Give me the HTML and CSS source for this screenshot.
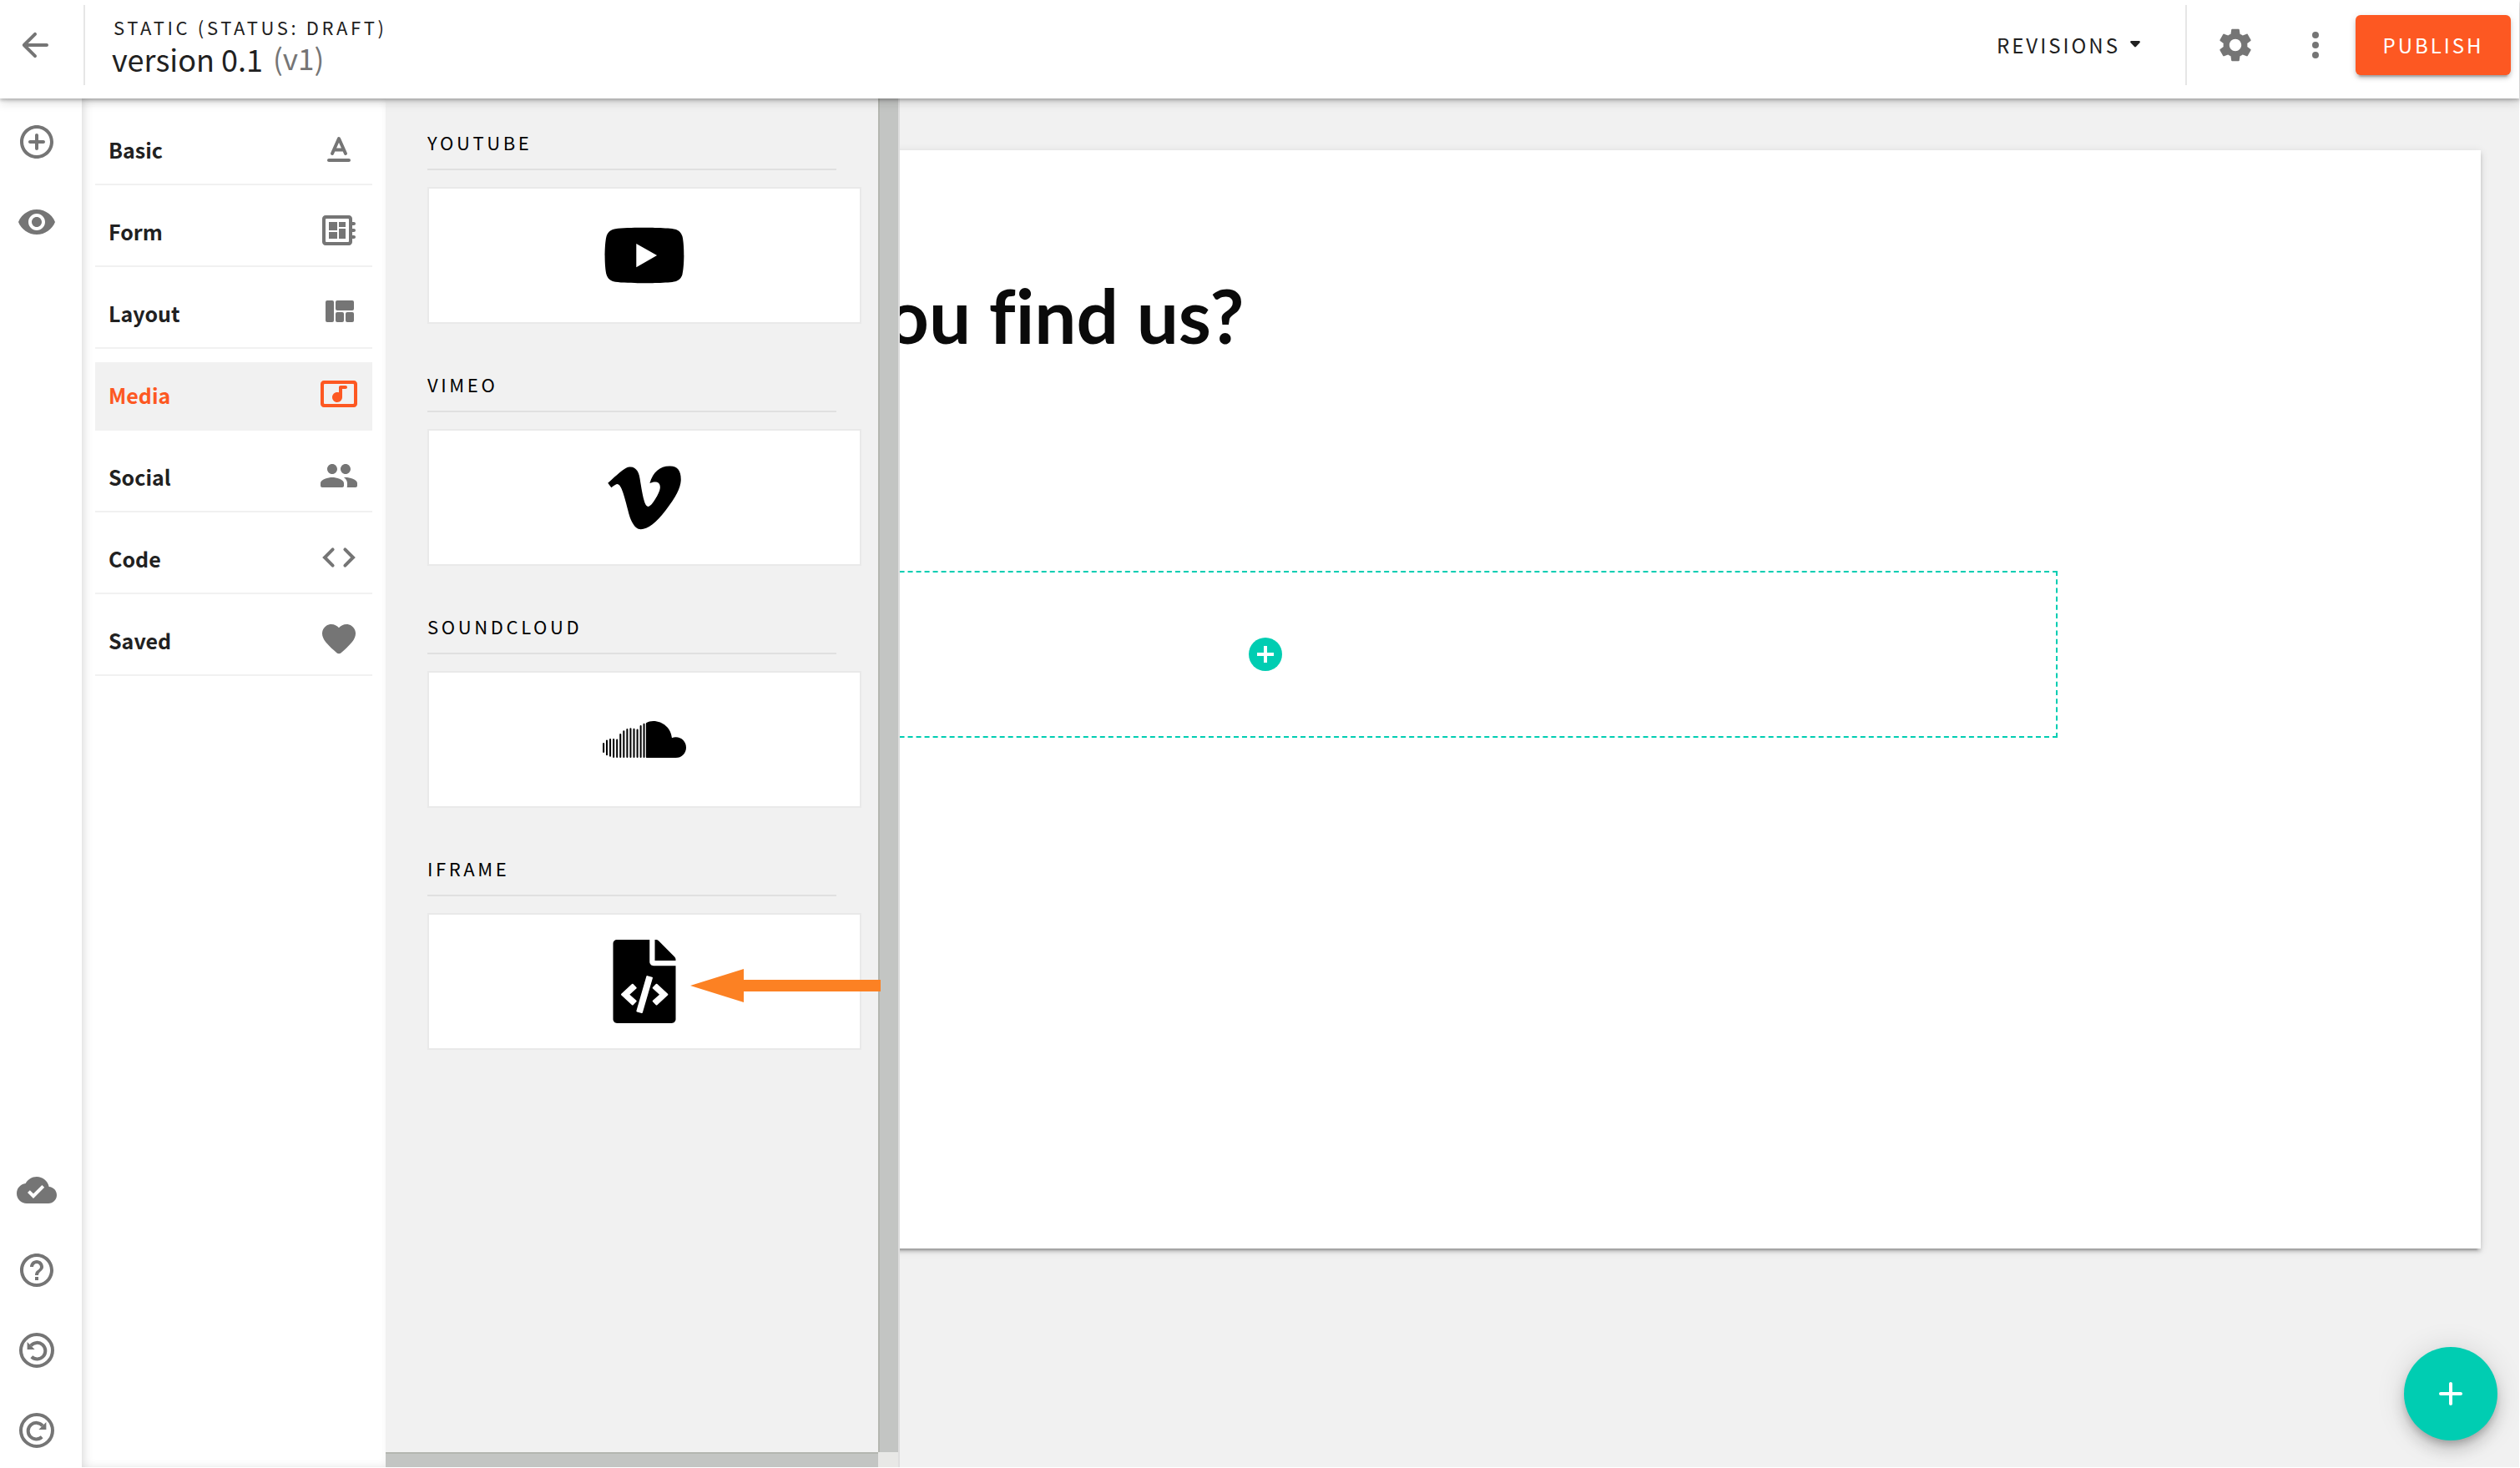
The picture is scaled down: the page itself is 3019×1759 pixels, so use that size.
FILE: index.html
```html
<!DOCTYPE html>
<html lang="en">
<head>
<meta charset="utf-8">
<title>version 0.1</title>
<link rel="stylesheet" href="styles.css">
</head>
<body>
<header class="topbar">
  <button class="icon-button back" type="button" aria-label="Back">
    <svg class="icon" viewBox="0 0 24 24"><path d="M19 11H7.83l4.88-4.88c.39-.39.39-1.03 0-1.42a.996.996 0 0 0-1.41 0l-6.59 6.59a.996.996 0 0 0 0 1.41l6.59 6.59a.996.996 0 1 0 1.41-1.41L7.83 13H19c.55 0 1-.45 1-1s-.45-1-1-1z"/></svg>
  </button>
  <div class="titles">
    <p class="status">STATIC (STATUS: DRAFT)</p>
    <h1 class="version">version 0.1 <span class="version-tag">(v1)</span></h1>
  </div>
  <button class="revisions" type="button">REVISIONS
    <svg class="caret" viewBox="0 0 12 8"><path d="M1.5 0h9c1.3 0 1.8 1.400.9 2.300L6.900 7.100c-.5.500-1.300.500-1.800 0L.6 2.300C-.300 1.400.200 0 1.500 0z"/></svg>
  </button>
  <div class="actions">
    <button class="icon-button" type="button" aria-label="Settings">
      <svg class="icon" viewBox="0 0 24 24"><path d="M19.14 12.94c.04-.3.06-.61.06-.94 0-.32-.02-.64-.07-.94l2.030-1.580c.18-.14.23-.41.12-.61l-1.920-3.320c-.12-.22-.37-.29-.59-.22l-2.390.96c-.5-.38-1.030-.7-1.620-.94l-.36-2.540c-.04-.24-.24-.41-.48-.41h-3.840c-.24 0-.43.17-.47.41l-.36 2.540c-.59.24-1.130.57-1.620.94l-2.390-.96c-.22-.08-.47 0-.59.22L2.740 8.870c-.12.21-.08.47.12.61l2.030 1.580c-.05.3-.09.63-.09.94s.02.64.07.94l-2.030 1.580c-.18.14-.23.41-.12.61l1.920 3.320c.12.22.37.29.59.22l2.390-.96c.5.38 1.030.7 1.620.94l.36 2.540c.05.24.24.41.48.41h3.840c.24 0 .44-.17.47-.41l.36-2.540c.59-.24 1.130-.56 1.620-.94l2.390.96c.22.08.47 0 .59-.22l1.920-3.320c.12-.22.07-.47-.12-.61l-2.010-1.580zM12 15.600c-1.980 0-3.600-1.620-3.600-3.600s1.620-3.600 3.600-3.600 3.600 1.620 3.600 3.600-1.620 3.600-3.600 3.600z"/></svg>
    </button>
    <button class="icon-button" type="button" aria-label="More">
      <svg class="icon" viewBox="0 0 24 24"><circle cx="12" cy="6" r="2"/><circle cx="12" cy="12" r="2"/><circle cx="12" cy="18" r="2"/></svg>
    </button>
  </div>
  <button class="publish" type="button">PUBLISH</button>
</header>

<div class="workspace">
  <nav class="rail" aria-label="Tools">
    <button class="icon-button" type="button" aria-label="Add">
      <svg class="icon" viewBox="0 0 24 24"><path d="M12 7c-.55 0-1 .45-1 1v3H8c-.55 0-1 .45-1 1s.45 1 1 1h3v3c0 .55.45 1 1 1s1-.45 1-1v-3h3c.55 0 1-.45 1-1s-.45-1-1-1h-3V8c0-.55-.45-1-1-1zm0-5C6.480 2 2 6.480 2 12s4.480 10 10 10 10-4.480 10-10S17.520 2 12 2zm0 18c-4.410 0-8-3.590-8-8s3.590-8 8-8 8 3.590 8 8-3.590 8-8 8z"/></svg>
    </button>
    <button class="icon-button" type="button" aria-label="Preview">
      <svg class="icon" viewBox="0 0 24 24"><path d="M12 4.500C7 4.500 2.730 7.610 1 12c1.730 4.390 6 7.500 11 7.500s9.270-3.110 11-7.500c-1.730-4.390-6-7.500-11-7.500zM12 17c-2.760 0-5-2.240-5-5s2.240-5 5-5 5 2.240 5 5-2.240 5-5 5zm0-8c-1.660 0-3 1.340-3 3s1.340 3 3 3 3-1.340 3-3-1.340-3-3-3z"/></svg>
    </button>
    <button class="icon-button rail-bottom" type="button" aria-label="Saved to cloud">
      <svg class="icon" viewBox="0 0 24 24"><path d="M19.350 10.040C18.670 6.590 15.640 4 12 4 9.110 4 6.600 5.640 5.350 8.040 2.340 8.360 0 10.910 0 14c0 3.310 2.690 6 6 6h13c2.760 0 5-2.240 5-5 0-2.640-2.050-4.780-4.650-4.960zM10 17l-3.500-3.500 1.410-1.410L10 14.170 15.180 9l1.410 1.410L10 17z"/></svg>
    </button>
    <button class="icon-button" type="button" aria-label="Help">
      <svg class="icon" viewBox="0 0 24 24"><path d="M11 18h2v-2h-2v2zm1-16C6.480 2 2 6.480 2 12s4.480 10 10 10 10-4.480 10-10S17.520 2 12 2zm0 18c-4.410 0-8-3.590-8-8s3.590-8 8-8 8 3.590 8 8-3.590 8-8 8zm0-14c-2.210 0-4 1.790-4 4h2c0-1.100.9-2 2-2s2 .9 2 2c0 2-3 1.750-3 5h2c0-2.250 3-2.500 3-5 0-2.210-1.790-4-4-4z"/></svg>
    </button>
    <button class="icon-button" type="button" aria-label="Undo">
      <svg class="icon line" viewBox="0 0 24 24"><circle cx="12" cy="12" r="9.500"/><path d="M8.500 9.200A4.900 4.900 0 1 1 8.900 15.900"/><path class="solid" d="M6.300 7v4.500h4.500z"/></svg>
    </button>
    <button class="icon-button" type="button" aria-label="Redo">
      <svg class="icon line" viewBox="0 0 24 24"><circle cx="12" cy="12" r="9.500"/><path d="M15.500 9.200A4.900 4.900 0 1 0 15.100 15.900"/><path class="solid" d="M17.700 7v4.500h-4.500z"/></svg>
    </button>
  </nav>

  <nav class="categories" aria-label="Component categories">
    <a class="category" href="#basic">Basic
      <svg class="icon" viewBox="0 0 24 24"><path d="M6 18h12c.55 0 1 .45 1 1s-.45 1-1 1H6c-.55 0-1-.45-1-1s.45-1 1-1z"/><path class="stroke" d="M8 15l4-9 4 9M9.300 12.700h5.400"/></svg></a>
    <a class="category" href="#form">Form
      <svg class="icon" viewBox="0 0 24 24"><path fill-rule="evenodd" d="M4 3h14c1.100 0 2 .9 2 2v2h1c.55 0 1 .45 1 1s-.45 1-1 1h-1v2h1c.55 0 1 .45 1 1s-.45 1-1 1h-1v2h1c.55 0 1 .45 1 1s-.45 1-1 1h-1v2c0 1.100-.9 2-2 2H4c-1.100 0-2-.9-2-2V5c0-1.100.9-2 2-2zm.5 2a.5.5 0 0 0-.5.5v13a.5.5 0 0 0 .5.5h13a.5.5 0 0 0 .5-.5v-13a.5.5 0 0 0-.5-.5z"/><path d="M6 13h5v4H6zM12 7h4v3h-4zM6 7h5v5H6zM12 11h4v6h-4z"/></svg></a>
    <a class="category" href="#layout">Layout
      <svg class="icon" viewBox="0 0 24 24"><rect x="4" y="5" width="5" height="13" rx="1"/><rect x="10" y="5" width="11" height="6" rx="1"/><rect x="10" y="12" width="5" height="6" rx="1"/><rect x="16" y="12" width="5" height="6" rx="1"/></svg></a>
    <a class="category active" href="#media">Media
      <svg class="icon" viewBox="0 0 24 24"><path fill-rule="evenodd" d="M3 4h18c1.100 0 2 .9 2 2v12c0 1.100-.9 2-2 2H3c-1.100 0-2-.9-2-2V6c0-1.100.9-2 2-2zm.5 2a.5.5 0 0 0-.5.5v11a.5.5 0 0 0 .5.5h17a.5.5 0 0 0 .5-.5v-11a.5.5 0 0 0-.5-.5z"/><path d="M8 14c0-1.660 1.340-3 3-3 .35 0 .69.07 1 .18V8c0-.55.45-1 1-1h3c.55 0 1 .45 1 1s-.45 1-1 1h-2v5.030c-.02 1.640-1.350 2.970-3 2.970-1.660 0-3-1.340-3-3z"/></svg></a>
    <a class="category" href="#social">Social
      <svg class="icon" viewBox="0 0 24 24"><path d="M16 11c1.660 0 2.990-1.340 2.990-3S17.660 5 16 5s-3 1.340-3 3 1.340 3 3 3zm-8 0c1.660 0 2.990-1.340 2.990-3S9.660 5 8 5 5 6.340 5 8s1.340 3 3 3zm0 2c-2.330 0-7 1.170-7 3.500V18c0 .55.45 1 1 1h12c.55 0 1-.45 1-1v-1.500c0-2.330-4.670-3.500-7-3.500zm8 0c-.29 0-.62.02-.97.05.02.01.03.03.04.04 1.140.83 1.930 1.940 1.930 3.410V18c0 .35-.07.69-.18 1H22c.55 0 1-.45 1-1v-1.500c0-2.330-4.670-3.500-7-3.500z"/></svg></a>
    <a class="category" href="#code">Code
      <svg class="icon line" viewBox="0 0 24 24"><path stroke-linecap="round" d="M8.300 7.200L3.500 12l4.800 4.800M15.700 7.200l4.800 4.800-4.800 4.800"/></svg></a>
    <a class="category" href="#saved">Saved
      <svg class="icon" viewBox="0 0 24 24"><path d="M13.350 20.130c-.76.69-1.930.69-2.690-.01l-.11-.1C5.300 15.270 1.870 12.160 2 8.280c.06-1.700.93-3.330 2.340-4.290 2.640-1.800 5.900-.96 7.660 1.100 1.760-2.060 5.020-2.910 7.660-1.100 1.410.96 2.280 2.590 2.340 4.290.14 3.880-3.300 6.990-8.550 11.760l-.1.090z"/></svg></a>
  </nav>

  <section class="flyout" aria-label="Media components">
    <div class="flyout-body">
      <section class="group">
        <h2 class="group-title">YOUTUBE</h2>
        <button class="card" type="button" aria-label="YouTube">
          <svg class="logo" viewBox="0 0 576 512"><path d="M549.655 124.083c-6.281-23.650-24.787-42.276-48.284-48.597C458.781 64 288 64 288 64S117.220 64 74.629 75.486c-23.497 6.322-42.003 24.947-48.284 48.597-11.412 42.867-11.412 132.305-11.412 132.305s0 89.438 11.412 132.305c6.281 23.650 24.787 41.500 48.284 47.821C117.220 448 288 448 288 448s170.780 0 213.371-11.486c23.497-6.321 42.003-24.171 48.284-47.821 11.412-42.867 11.412-132.305 11.412-132.305s0-89.438-11.412-132.305zm-317.510 213.508V175.185l142.739 81.205-142.739 81.201z"/></svg>
        </button>
      </section>
      <section class="group">
        <h2 class="group-title">VIMEO</h2>
        <button class="card" type="button" aria-label="Vimeo">
          <svg class="logo" viewBox="0 0 448 512"><path d="M447.800 153.600c-2 43.600-32.400 103.300-91.400 179.100-60.900 79.200-112.400 118.800-154.600 118.800-26.100 0-48.200-24.100-66.300-72.300C100.300 250 85.300 174.300 56.200 174.300c-3.400 0-15.100 7.100-35.200 21.100L0 168.200c51.600-45.300 100.900-95.700 131.800-98.500 34.900-3.400 56.300 20.500 64.400 71.500 28.700 181.500 41.400 208.900 93.600 126.700 18.700-29.600 28.800-52.100 30.200-67.600 4.800-45.900-35.800-42.800-63.300-31 22-72.100 64.100-107.100 126.200-105.100 45.800 1.200 67.500 31.100 64.900 89.400z"/></svg>
        </button>
      </section>
      <section class="group">
        <h2 class="group-title">SOUNDCLOUD</h2>
        <button class="card" type="button" aria-label="SoundCloud">
          <svg class="logo" viewBox="0 0 640 512"><path d="M334 129c15-9 34-14 54-14 76 0 137 57 143 130 9-4 19-6 30-6 44 0 79 35 79 79s-35 79-79 79H339c-4 0-7-3-7-7V134c0-2 1-4 2-5z"/><path stroke="#000" stroke-width="13" stroke-linecap="round" d="M7 288v64M32 266v106M58 256v126M84 256v134M110 260v130M136 217v173M162 194v196M188 180v210M214 175v215M240 178v212M266 182v208M292 153v237M317 140v250"/></svg>
        </button>
      </section>
      <section class="group">
        <h2 class="group-title">IFRAME</h2>
        <button class="card" type="button" aria-label="Iframe">
          <svg class="logo" viewBox="0 0 384 512"><path d="M384 121.941V128H256V0h6.059c6.365 0 12.470 2.529 16.971 7.029l97.941 97.941A24.005 24.005 0 0 1 384 121.941zM248 160c-13.200 0-24-10.800-24-24V0H24C10.745 0 0 10.745 0 24v464c0 13.255 10.745 24 24 24h336c13.255 0 24-10.745 24-24V160H248zM123.206 400.505a5.400 5.400 0 0 1-7.633.246l-64.866-60.812a5.400 5.400 0 0 1 0-7.879l64.866-60.812a5.400 5.400 0 0 1 7.633.246l19.579 20.885a5.400 5.400 0 0 1-.372 7.747L101.650 336l40.763 35.874a5.400 5.400 0 0 1 .372 7.747l-19.579 20.884zm51.295 50.479l-27.970-8.120a5.402 5.402 0 0 1-3.687-6.694l61.440-211.626a5.402 5.402 0 0 1 6.694-3.687l27.970 8.120a5.400 5.400 0 0 1 3.687 6.694L181.196 447.297a5.402 5.402 0 0 1-6.695 3.687zm160.792-111.045l-64.866 60.812a5.400 5.400 0 0 1-7.633-.246l-19.580-20.885a5.400 5.400 0 0 1 .372-7.747L284.350 336l-40.763-35.874a5.400 5.400 0 0 1-.372-7.747l19.580-20.885a5.400 5.400 0 0 1 7.633-.246l64.866 60.812a5.400 5.400 0 0 1-.001 7.879z"/></svg>
          <svg class="pointer" viewBox="0 0 228 40"><path d="M0 20L64 0v13h164v14H64v13z"/></svg>
        </button>
      </section>
    </div>
    <div class="scroll-y"></div>
    <div class="scroll-x"></div>
    <div class="scroll-corner"></div>
  </section>

  <main class="canvas">
    <article class="sheet">
      <h2 class="headline">Where can you find us?</h2>
      <div class="dropzone">
        <button class="add-block" type="button" aria-label="Add block">
          <svg class="add-icon" viewBox="0 0 40 40"><path d="M18 10h4v8h8v4h-8v8h-4v-8h-8v-4h8z"/></svg>
        </button>
      </div>
    </article>
  </main>
</div>

<button class="fab" type="button" aria-label="Add section">
  <svg class="icon" viewBox="0 0 24 24"><path d="M18 13h-5v5c0 .55-.45 1-1 1s-1-.45-1-1v-5H6c-.55 0-1-.45-1-1s.45-1 1-1h5V6c0-.55.45-1 1-1s1 .45 1 1v5h5c.55 0 1 .45 1 1s-.45 1-1 1z"/></svg>
</button>
</body>
</html>
```
FILE: styles.css
```css
* {
  box-sizing: border-box;
}

body {
  margin: 0;
  min-height: 100vh;
  padding: 0 1px 1px 0;
  display: flex;
  flex-direction: column;
  background: #fff;
  color: #212121;
  font-family: "Noto Sans CJK SC", "Noto Sans", sans-serif;
}

button {
  margin: 0;
  padding: 0;
  border: 0;
  background: none;
  color: inherit;
  font: inherit;
  cursor: pointer;
}

h1,
h2,
p {
  margin: 0;
  font-weight: 400;
}

.icon {
  display: block;
  width: 48px;
  height: 48px;
  flex: none;
  fill: currentColor;
}

.icon.line {
  fill: none;
  stroke: currentColor;
  stroke-width: 2;
}

.icon .solid {
  fill: currentColor;
  stroke: none;
}

.icon .stroke {
  fill: none;
  stroke: currentColor;
  stroke-width: 2;
  stroke-linecap: round;
  stroke-linejoin: round;
}

.icon-button {
  width: 48px;
  height: 48px;
  color: #757575;
}

/* Top bar */
.topbar {
  position: relative;
  z-index: 4;
  display: flex;
  align-items: center;
  padding: 6px 10px 16px 18px;
  background: #fff;
  box-shadow: 0 2px 4px rgba(0, 0, 0, 0.24), 0 4px 12px rgba(0, 0, 0, 0.16);
}

.titles {
  display: flex;
  flex-direction: column;
  justify-content: center;
  height: 96px;
  margin-left: 34px;
  padding-left: 32px;
  border-left: 2px solid #e6e6e6;
}

.status {
  padding-left: 2px;
  font-size: 22px;
  line-height: 32px;
  letter-spacing: 0.165em;
}

.version {
  font-size: 36px;
  line-height: 44px;
}

.version-tag {
  margin-left: 4px;
  color: #757575;
  font-size: 35px;
  line-height: 1;
  vertical-align: 2px;
}

.revisions {
  display: flex;
  align-items: center;
  gap: 12px;
  margin-left: auto;
  padding-bottom: 2px;
  font-size: 24px;
  letter-spacing: 3px;
}

.caret {
  width: 12px;
  height: 8px;
  fill: currentColor;
}

.actions {
  display: flex;
  align-items: center;
  gap: 48px;
  height: 96px;
  margin-left: 54px;
  padding: 0 24px 0 34px;
  border-left: 2px solid #e6e6e6;
}

.publish {
  width: 186px;
  height: 72px;
  padding-bottom: 2px;
  border-radius: 6px;
  background: #fd5822;
  box-shadow: 0 6px 2px -4px rgba(0, 0, 0, 0.2), 0 4px 4px rgba(0, 0, 0, 0.14), 0 2px 10px rgba(0, 0, 0, 0.12);
  color: #fff;
  font-size: 24px;
  letter-spacing: 3px;
}

/* The side panels lie on top of the canvas in the same grid row */
.workspace {
  flex: 1;
  display: grid;
  grid-template: 1fr / 98px 364px 616px 1fr;
}

.rail,
.categories,
.flyout {
  grid-row: 1;
  z-index: 2;
}

.rail {
  grid-column: 1;
  display: flex;
  flex-direction: column;
  align-items: center;
  gap: 48px;
  padding: 28px 10px 20px 0;
  background: #fff;
}

.rail-bottom {
  margin-top: auto;
}

.categories {
  grid-column: 2;
  display: flex;
  flex-direction: column;
  gap: 16px;
  padding: 22px 16px;
  background: #fff;
  box-shadow: inset 4px 0 14px -4px rgba(0, 0, 0, 0.2);
}

.category {
  display: flex;
  align-items: flex-start;
  justify-content: space-between;
  padding: 14px 16px 16px;
  border-bottom: 2px solid #f1f1f1;
  color: inherit;
  font-size: 25px;
  font-weight: 700;
  line-height: 50px;
  text-decoration: none;
}

.category .icon {
  color: #757575;
}

.category.active,
.category.active .icon {
  background: #f1f1f1;
  color: #fd5822;
}

/* Component flyout */
.flyout {
  grid-column: 3;
  display: grid;
  grid-template: 1fr 18px / minmax(0, 1fr) 24px;
  border-right: 2px solid #dedede;
  background: #f1f1f1;
}

.flyout-body {
  display: flex;
  flex-direction: column;
  gap: 58px;
  padding: 38px 50px;
  color: #000;
}

.group-title {
  margin-bottom: 20px;
  padding-bottom: 18px;
  border-bottom: 2px solid #e0e0e0;
  font-size: 22px;
  line-height: 28px;
  letter-spacing: 0.165em;
}

.card {
  position: relative;
  display: flex;
  align-items: center;
  justify-content: center;
  width: 520px;
  height: 164px;
  border: 2px solid #e9e9e9;
  background: #fff;
}

.logo {
  width: 100px;
  height: 100px;
}

.pointer {
  position: absolute;
  top: 65px;
  left: 313px;
  z-index: 3;
  width: 228px;
  height: 40px;
  fill: #fc8123;
}

.scroll-y {
  border-left: 2px solid #b4b6b0;
  background: #c3c5c3;
}

.scroll-x {
  border-top: 2px solid #b4b6b0;
  background: #c3c5c3;
}

.scroll-corner {
  background: #e8e8e6;
}

/* Canvas */
.canvas {
  grid-row: 1;
  grid-column: 2 / -1;
  display: flex;
  padding: 62px 46px 262px 0;
  background: #f1f1f1;
}

.sheet {
  flex: 1;
  padding: 142px 507px 0 469px;
  background: #fff;
  box-shadow: 0 6px 2px -4px rgba(0, 0, 0, 0.2), 0 4px 4px rgba(0, 0, 0, 0.14), 0 2px 10px rgba(0, 0, 0, 0.12);
}

.headline {
  margin-bottom: 250px;
  color: #0a0a0a;
  font-family: Lato, sans-serif;
  font-size: 89px;
  font-weight: 700;
  font-variant-ligatures: none;
  line-height: 112px;
}

.dropzone {
  display: flex;
  align-items: center;
  justify-content: center;
  height: 200px;
  border: 2px dashed #00cdb2;
}

.add-block {
  width: 40px;
  height: 40px;
  border-radius: 50%;
  background: #00cdb2;
}

.add-icon {
  display: block;
  fill: #fff;
}

.fab {
  position: fixed;
  right: 27px;
  bottom: 33px;
  z-index: 5;
  display: flex;
  align-items: center;
  justify-content: center;
  width: 112px;
  height: 112px;
  border-radius: 50%;
  background: #00cdb2;
  box-shadow: 0 6px 10px -2px rgba(0, 0, 0, 0.2), 0 12px 20px rgba(0, 0, 0, 0.14), 0 2px 36px rgba(0, 0, 0, 0.12);
  color: #fff;
}
```
